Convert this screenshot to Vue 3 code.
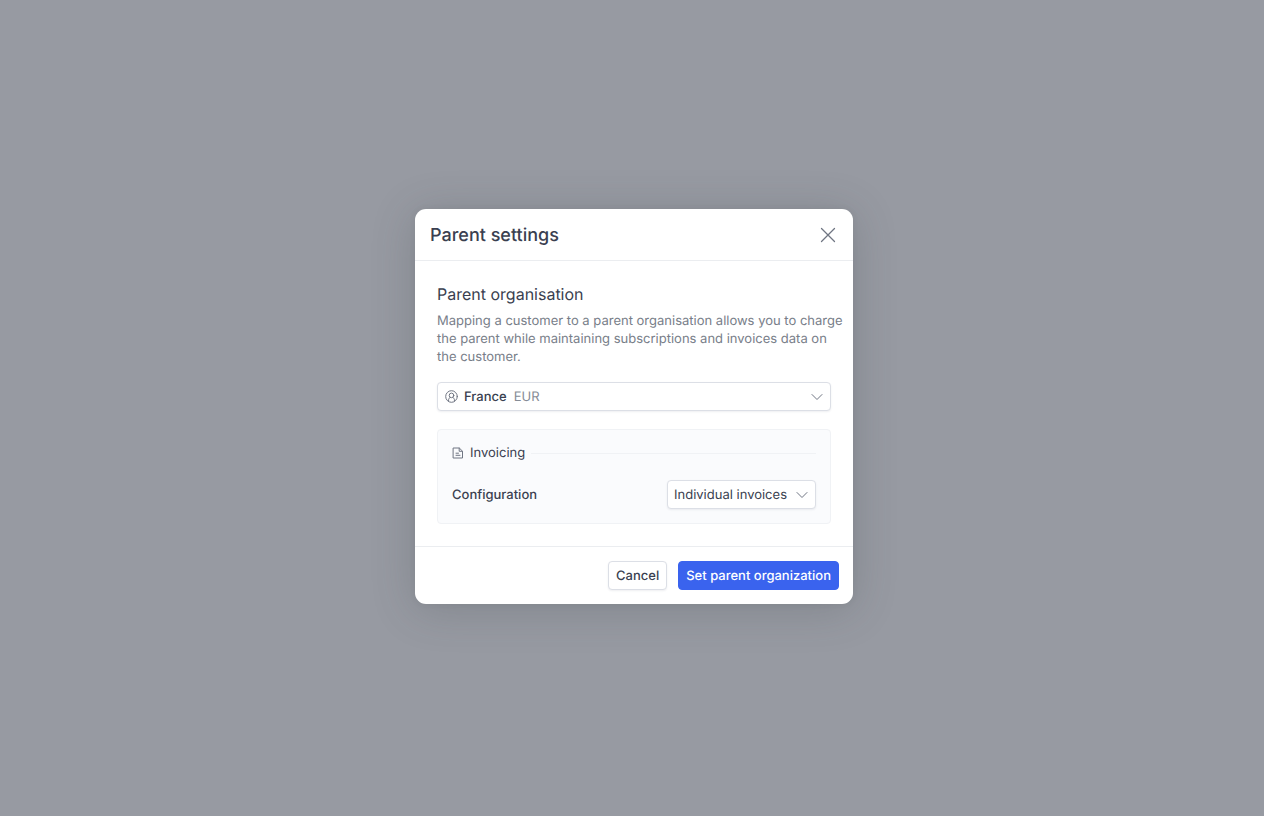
<script setup>
import { ref } from 'vue'

const organisations = [
  { name: 'France', currency: 'EUR' },
  { name: 'Germany', currency: 'EUR' },
  { name: 'Switzerland', currency: 'CHF' },
]
const parent = ref(organisations[0])
const invoicing = ref('Individual invoices')
</script>

<template>
  <div class="overlay">
    <section class="modal" role="dialog" aria-modal="true" aria-labelledby="modal-title">
      <header class="modal-header">
        <h1 id="modal-title">Parent settings</h1>
        <button class="close" type="button" aria-label="Close">
          <svg width="16" height="16" viewBox="0 0 16 16"><path d="M1.5 1.5l13 13M14.5 1.5l-13 13" /></svg>
        </button>
      </header>

      <div class="modal-body">
        <label class="section-title" for="parent">Parent organisation</label>
        <p class="description">
          Mapping a customer to a parent organisation allows you to charge the parent while
          maintaining subscriptions and invoices data on the customer.
        </p>

        <div class="field">
          <select id="parent" v-model="parent" class="control parent-select">
            <option v-for="o in organisations" :key="o.name" :value="o">{{ o.name }}</option>
          </select>
          <div class="adornments" aria-hidden="true">
            <svg class="icon" width="13" height="13" viewBox="0 0 13 13">
              <circle cx="6.5" cy="6.5" r="5.8" />
              <circle cx="6.5" cy="5.4" r="2.3" />
              <path d="M3.6 10.9V9.6c0-1 .6-1.7 1.5-2M9.4 10.9V9.6c0-1-.6-1.7-1.5-2" />
            </svg>
            <span class="spacer">{{ parent.name }}</span>
            <span class="currency">{{ parent.currency }}</span>
            <svg class="icon chevron" width="12" height="12" viewBox="0 0 12 12"><path d="M1 3.5l5 5 5-5" /></svg>
          </div>
        </div>

        <div class="panel">
          <h2 class="panel-title">
            <svg class="icon" width="12" height="12" viewBox="0 0 12 12">
              <path d="M1.5 1h5.8l3.2 3.2V11h-9zM7.2 1.2v3.1h3.1M4 6.2h2.5M4 8.3h4" />
            </svg>
            Invoicing
          </h2>
          <div class="row">
            <label for="configuration">Configuration</label>
            <div class="field">
              <select id="configuration" v-model="invoicing" class="control invoice-select">
                <option>Individual invoices</option>
                <option>Single invoice</option>
              </select>
              <div class="adornments" aria-hidden="true">
                <svg class="icon chevron" width="12" height="12" viewBox="0 0 12 12"><path d="M1 3.5l5 5 5-5" /></svg>
              </div>
            </div>
          </div>
        </div>
      </div>

      <footer class="modal-footer">
        <button class="btn" type="button">Cancel</button>
        <button class="btn primary" type="button">Set parent organization</button>
      </footer>
    </section>
  </div>
</template>

<style>
body {
  background: #979aa2;
}
</style>

<style scoped>
.overlay,
.overlay * {
  box-sizing: border-box;
}
.overlay {
  min-height: 100vh;
  display: flex;
  align-items: center;
  justify-content: center;
  padding: 0 0 3px 4px;
  background: #979aa2;
  color: #3a3f50;
  font: 400 13px/18px Inter, sans-serif;
  text-rendering: geometricPrecision;
}
.modal {
  width: 100%;
  max-width: 438px;
  background: #fff;
  border-radius: 11px;
  box-shadow: 0 5px 44px rgba(60, 66, 70, 0.24), 0 0 6px rgba(60, 66, 70, 0.08);
}
.modal-header {
  display: flex;
  align-items: center;
  justify-content: space-between;
  height: 52px;
  padding: 0 15px;
  border-bottom: 1px solid #ebedf0;
}
h1 {
  margin: 0;
  padding-top: 3px;
  font-size: 18px;
  line-height: 24px;
  font-weight: 500;
}
.close {
  display: flex;
  padding: 2px;
  border: 0;
  background: none;
}
svg {
  display: block;
  flex: none;
  fill: none;
  stroke: #6f7582;
  stroke-width: 1.3;
  stroke-linecap: round;
  stroke-linejoin: round;
}
.icon {
  stroke-width: 1;
}
.modal-body {
  padding: 22px;
}
.section-title {
  display: block;
  font-size: 16px;
  line-height: 22px;
}
.description {
  margin: 7px -14px 16px 0;
  color: #787e89;
}
.field {
  display: grid;
}
.field > * {
  grid-area: 1 / 1;
}
.control {
  appearance: none;
  width: 100%;
  height: 29px;
  margin: 0;
  border: 1px solid #dcdfe6;
  border-radius: 4px;
  background: #fff;
  box-shadow: 0 1px 2px rgba(40, 50, 80, 0.08);
  color: inherit;
  font: inherit;
  text-rendering: inherit;
}
.parent-select {
  padding: 0 30px 0 26px;
  font-weight: 500;
}
.invoice-select {
  padding: 0 28px 0 6px;
}
.adornments {
  display: flex;
  align-items: center;
  padding: 0 8px;
  pointer-events: none;
  z-index: 1;
}
.spacer {
  visibility: hidden;
  margin: 0 7px 0 6px;
  font-weight: 500;
}
.currency {
  color: #868c96;
}
.chevron {
  margin-left: auto;
}
.panel {
  margin-top: 18px;
  padding: 14px;
  border: 1px solid #f0f2f5;
  border-radius: 4px;
  background: #fafbfd;
}
.panel-title {
  display: flex;
  align-items: center;
  gap: 6px;
  margin: 0 0 18px;
  font-size: 13px;
  line-height: 18px;
  font-weight: 400;
}
.panel-title::after {
  content: '';
  flex: 1;
  height: 1px;
  background: #f0f2f5;
}
.row {
  display: flex;
  align-items: center;
  justify-content: space-between;
}
.row label {
  font-weight: 500;
}
.modal-footer {
  display: flex;
  justify-content: flex-end;
  gap: 11px;
  padding: 14px;
  border-top: 1px solid #ebedf0;
}
.btn {
  height: 29px;
  padding: 0 7px;
  border: 1px solid #dcdfe6;
  border-radius: 4px;
  background: #fff;
  box-shadow: 0 1px 2px rgba(40, 50, 80, 0.08);
  color: inherit;
  font: inherit;
  font-weight: 500;
  text-rendering: inherit;
}
.primary {
  border-color: #3a63ee;
  background: #3a63ee;
  box-shadow: none;
  color: #fff;
}
</style>
